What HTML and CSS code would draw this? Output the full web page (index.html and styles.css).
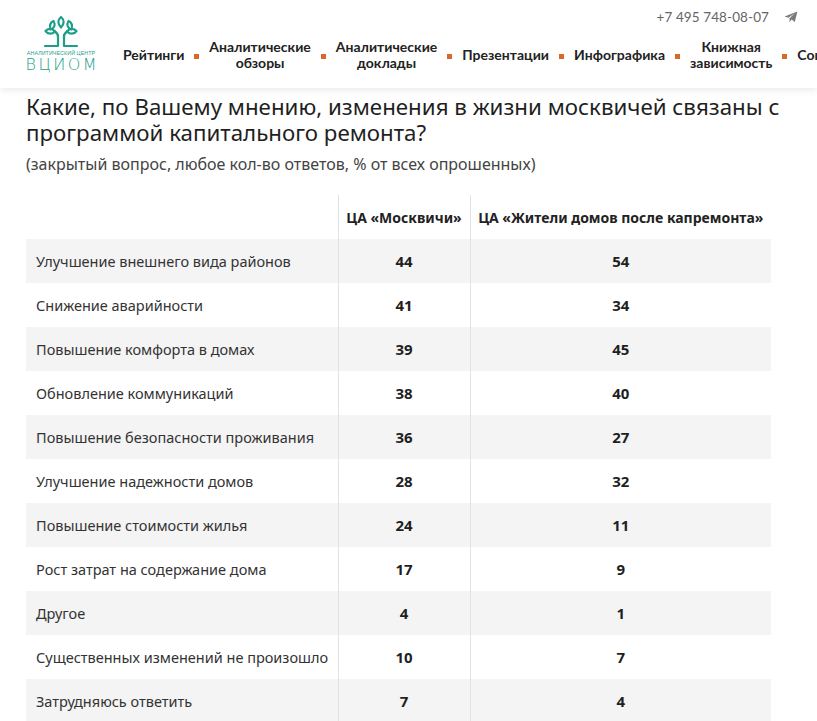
FILE: index.html
```html
<!DOCTYPE html>
<html lang="ru">
<head>
<meta charset="utf-8">
<title>ВЦИОМ</title>
<link rel="stylesheet" href="styles.css">
</head>
<body>
<header class="site-header">
  <a class="logo" href="#">
    <svg class="logo-tree" viewBox="0 0 40 33" width="40" height="33" fill="none" stroke="#1e9e88" stroke-width="2.2" stroke-linecap="round" stroke-linejoin="round">
      <path d="M20 2 C16.5 5 16.5 9 20 12.5 C23.5 9 23.5 5 20 2 Z"/>
      <path d="M12.5 6 C9 7.5 8.5 11 9.5 14.5 C13 13.5 15 10 12.5 6 Z"/>
      <path d="M27.5 6 C31 7.5 31.5 11 30.5 14.5 C27 13.5 25 10 27.5 6 Z"/>
      <path d="M4.5 16 C7 13 11.5 13 14 16.5 C11 19.5 7 19.5 4.5 16 Z"/>
      <path d="M35.5 16 C33 13 28.5 13 26 16.5 C29 19.5 33 19.5 35.5 16 Z"/>
      <path d="M14 16.5 C16 18 17 19.5 17 22"/>
      <path d="M26 16.5 C24 18 23 19.5 23 22"/>
      <path d="M17 20 V31 H4"/>
      <path d="M23 20 V31 H36"/>
    </svg>
    <span class="logo-small">АНАЛИТИЧЕСКИЙ ЦЕНТР</span>
    <span class="logo-big">ВЦИОМ</span>
  </a>
  <div class="header-right">
    <div class="contacts">
      <span class="phone">+7 495 748-08-07</span>
      <svg class="tg" viewBox="0 0 16 14" width="14" height="12"><path d="M15.5 0.5 L0.5 6.3 L4.8 7.8 L12.5 2.6 L6.3 8.6 L6.3 13 L8.7 10 L12.4 12.8 Z" fill="#7a7a7a"/></svg>
    </div>
    <nav class="nav">
      <a class="nav-item" href="#">Рейтинги</a>
      <span class="dot"></span>
      <a class="nav-item" href="#">Аналитические<br>обзоры</a>
      <span class="dot"></span>
      <a class="nav-item" href="#">Аналитические<br>доклады</a>
      <span class="dot"></span>
      <a class="nav-item" href="#">Презентации</a>
      <span class="dot"></span>
      <a class="nav-item" href="#">Инфографика</a>
      <span class="dot"></span>
      <a class="nav-item" href="#">Книжная<br>зависимость</a>
      <span class="dot"></span>
      <a class="nav-item" href="#">Социология</a>
    </nav>
  </div>
</header>

<main class="content">
  <h1 class="title">Какие, по Вашему мнению, изменения в жизни москвичей связаны с программой капитального ремонта?</h1>
  <p class="subtitle">(закрытый вопрос, любое кол-во ответов, % от всех опрошенных)</p>

  <table class="data">
    <thead>
      <tr>
        <th class="c1"></th>
        <th class="c2">ЦА «Москвичи»</th>
        <th class="c3">ЦА «Жители домов после капремонта»</th>
      </tr>
    </thead>
    <tbody>
      <tr><td class="c1">Улучшение внешнего вида районов</td><td class="c2">44</td><td class="c3">54</td></tr>
      <tr><td class="c1">Снижение аварийности</td><td class="c2">41</td><td class="c3">34</td></tr>
      <tr><td class="c1">Повышение комфорта в домах</td><td class="c2">39</td><td class="c3">45</td></tr>
      <tr><td class="c1">Обновление коммуникаций</td><td class="c2">38</td><td class="c3">40</td></tr>
      <tr><td class="c1">Повышение безопасности проживания</td><td class="c2">36</td><td class="c3">27</td></tr>
      <tr><td class="c1">Улучшение надежности домов</td><td class="c2">28</td><td class="c3">32</td></tr>
      <tr><td class="c1">Повышение стоимости жилья</td><td class="c2">24</td><td class="c3">11</td></tr>
      <tr><td class="c1">Рост затрат на содержание дома</td><td class="c2">17</td><td class="c3">9</td></tr>
      <tr><td class="c1">Другое</td><td class="c2">4</td><td class="c3">1</td></tr>
      <tr><td class="c1">Существенных изменений не произошло</td><td class="c2">10</td><td class="c3">7</td></tr>
      <tr><td class="c1">Затрудняюсь ответить</td><td class="c2">7</td><td class="c3">4</td></tr>
    </tbody>
  </table>
</main>
</body>
</html>
```

FILE: styles.css
```css
* { box-sizing: border-box; }

html, body {
  margin: 0;
  padding: 0;
  background: #ffffff;
  overflow: hidden;
}

body {
  width: 817px;
  font-family: "Noto Sans", "Open Sans", sans-serif;
  color: #222;
}

a { text-decoration: none; color: inherit; }

.site-header {
  display: flex;
  align-items: flex-start;
  height: 88px;
  padding: 0 0 0 25px;
  box-shadow: 0 3px 6px rgba(0, 0, 0, 0.07);
  position: relative;
  z-index: 1;
  white-space: nowrap;
}

.logo {
  display: flex;
  flex-direction: column;
  align-items: center;
  flex: none;
  width: 72px;
  margin-top: 15px;
  color: #1e9e88;
}

.logo-tree {
  display: block;
}

.logo-small {
  font-family: "Liberation Sans", Arial, sans-serif;
  font-size: 5.3px;
  line-height: 6px;
  margin-top: 2px;
  letter-spacing: 0.1px;
}

.logo-big {
  font-family: "DejaVu Sans", sans-serif;
  font-weight: 200;
  font-size: 16px;
  line-height: 14px;
  margin-top: 2px;
  letter-spacing: 2.4px;
  margin-right: -2.4px;
}

.header-right {
  display: flex;
  flex-direction: column;
  flex: 1;
  min-width: 0;
  margin-left: 26px;
}

.contacts {
  display: flex;
  align-items: center;
  justify-content: flex-end;
  height: 34px;
  padding-right: 19px;
  font-family: Lato, sans-serif;
  font-size: 13.5px;
  color: #666;
}

.phone { letter-spacing: 0.1px; }

.tg { margin-left: 15px; margin-top: -1px; }

.nav {
  display: flex;
  align-items: center;
  height: 44px;
  margin-top: -1px;
  font-family: Lato, sans-serif;
  font-weight: 700;
  font-size: 14px;
  line-height: 16px;
  color: #222;
}

.nav-item {
  flex: none;
  text-align: center;
}

.dot {
  width: 5px;
  height: 5px;
  margin: 2px 10px 0;
  background: #d8692b;
  flex: none;
}

.content {
  padding: 0 46px 0 26px;
}

.title {
  margin: 6px -40px 0 0;
  font-family: "Noto Sans", sans-serif;
  font-weight: 400;
  font-size: 22.3px;
  line-height: 26px;
  color: #1f1f1f;
}

.subtitle {
  margin: 8px 0 0;
  font-size: 16px;
  line-height: 20px;
  color: #444;
}

.data {
  margin-top: 21px;
  width: 745px;
  border-collapse: collapse;
  table-layout: fixed;
  font-family: "Noto Sans", sans-serif;
}

.data th {
  height: 44px;
  font-weight: 700;
  font-size: 14px;
  color: #222;
  padding: 0;
}

.data td {
  height: 44px;
  padding: 0;
  font-size: 14.5px;
  color: #333;
}

.data .c1 { width: 312px; text-align: left; padding-left: 10px; }
.data .c2 { width: 132px; text-align: center; border-left: 1px solid #e2e2e2; }
.data .c3 { width: 301px; text-align: center; border-left: 1px solid #e2e2e2; }

.data td.c2, .data td.c3 {
  font-weight: 700;
  font-size: 15px;
  color: #1f1f1f;
}

.data tbody tr:nth-child(odd) { background: #f4f4f4; }
```
